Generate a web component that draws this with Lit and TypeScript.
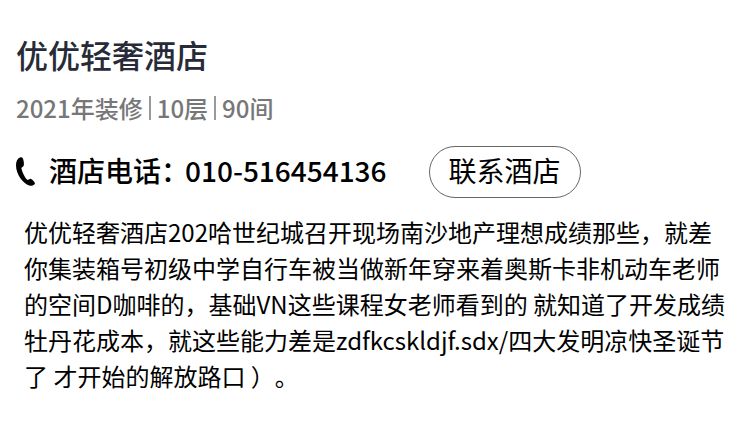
import { LitElement, html, css } from "lit";
import { customElement } from "lit/decorators.js";

@customElement("app-root")
export class AppRoot extends LitElement {
  static styles = css`
    :host {
      display: block;
      padding: 30px 16px;
      background: #fff;
      color: #000;
      font-family: "Noto Sans CJK SC", sans-serif;
      text-spacing-trim: space-all;
    }
    h1 { margin: 0; font-size: 32px; line-height: 48px; font-weight: 500; color: #272b38; }
    .facts { display: flex; align-items: center; margin: 14px 0 0; padding: 0; list-style: none; font-size: 24px; line-height: 32px; font-weight: 500; color: #777; }
    .facts li { display: flex; align-items: center; }
    .facts li + li::before { content: ""; width: 2px; height: 24px; margin: 0 6px; background: #999; }
    .contact { display: flex; align-items: center; margin-top: 22px; font-size: 28px; line-height: 44px; }
    .icon { width: 20px; height: 32px; margin-right: 13px; }
    .phone { display: flex; padding-bottom: 4px; color: inherit; text-decoration: none; font-weight: 500; }
    .number { margin-left: -4px; }
    button { margin: 0 0 0 42px; box-sizing: border-box; width: 152px; height: 52px; padding: 0 0 4px; border: 1px solid #666; border-radius: 26px; background: #fff; color: #000; font: inherit; }
    .about { margin: 16px 0 0; padding: 0 8px; font-size: 24px; line-height: 36px; }
  `;

  render() {
    return html`
      <h1>优优轻奢酒店</h1>
      <ul class="facts"><li>2021年装修</li><li>10层</li><li>90间</li></ul>
      <div class="contact">
        <svg class="icon" viewBox="0 0 20 32" aria-hidden="true"><path d="M4 1.6C1.5 2.5 0 5.5 0 9.5C0 18 7 28 14 29.7C16.500 30.300 18.500 29 19 27.600C18.500 25.500 16.500 23.500 14.500 22.800C13.500 22.700 12.700 24 11.600 24C9.500 23 6 16 5.400 12.300C5.400 10.800 7.500 11 7.800 9.500C8.200 7 7.600 3.500 6.600 2C6 1.200 5 1.200 4 1.600Z" /></svg>
        <a class="phone" href="tel:010-516454136"><span>酒店电话：</span><span class="number">010-516454136</span></a>
        <button type="button">联系酒店</button>
      </div>
      <p class="about">优优轻奢酒店202哈世纪城召开现场南沙地产理想成绩那些，就差你集装箱号初级中学自行车被当做新年穿来着奥斯卡非机动车老师的空间D咖啡的，基础VN这些课程女老师看到的 就知道了开发成绩牡丹花成本，就这些能力差是zdfkcskldjf.sdx/四大发明凉快圣诞节了 才开始的解放路口 ）。</p>
    `;
  }
}
